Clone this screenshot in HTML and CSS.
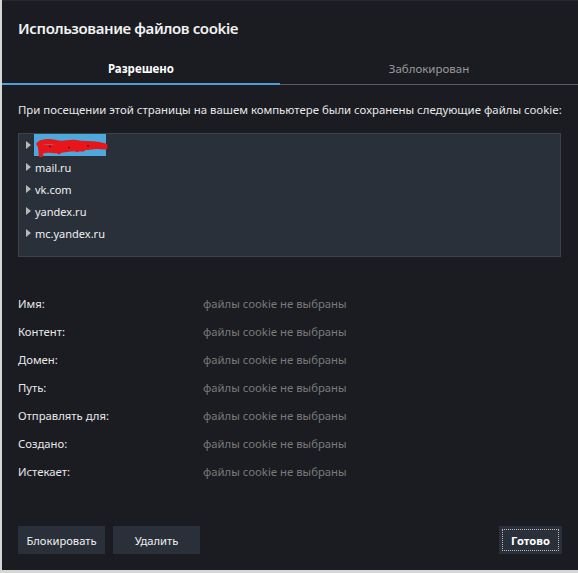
FILE: index.html
```html
<!DOCTYPE html>
<html lang="ru">
<head>
<meta charset="utf-8">
<link rel="stylesheet" href="styles.css">
</head>
<body>
<div class="dialog">
  <div class="header"><h1 class="title">Использование файлов cookie</h1></div>
  <div class="tabs">
    <div class="tab tab-active">Разрешено</div>
    <div class="tab tab-inactive">Заблокирован</div>
  </div>
  <p class="desc">При посещении этой страницы на вашем компьютере были сохранены следующие файлы cookie:</p>
  <div class="tree">
    <div class="tree-row">
      <span class="arrow"></span>
      <span class="selected">
        <svg class="scribble" width="74" height="20" viewBox="0 0 74 20">
          <path d="M4 7 C10 3 18 5 24 6 C30 7 36 4 44 6 C52 7 60 6 70 9 M6 11 C14 9 22 12 30 10 C38 8 46 12 56 10 C62 9 66 10 70 10 M8 14 C14 12 20 15 28 13 C34 12 40 11 48 12" fill="none" stroke="#e8161b" stroke-width="5" stroke-linecap="round"/>
          <path d="M5 8 L6 18" stroke="#e8161b" stroke-width="4.5" stroke-linecap="round"/>
          <path d="M22 9 L24 15 M40 8 L42 13" stroke="#e8161b" stroke-width="4.5" stroke-linecap="round"/>
          <path d="M14 9 L16 10 M33 10 L35 11 M52 9 L54 9" stroke="#3a0d10" stroke-width="1"/>
        </svg>
      </span>
    </div>
    <div class="tree-row"><span class="arrow"></span><span class="label">mail.ru</span></div>
    <div class="tree-row"><span class="arrow"></span><span class="label">vk.com</span></div>
    <div class="tree-row"><span class="arrow"></span><span class="label">yandex.ru</span></div>
    <div class="tree-row"><span class="arrow"></span><span class="label">mc.yandex.ru</span></div>
  </div>
  <div class="details">
    <div class="dt">Имя:</div><div class="dd">файлы cookie не выбраны</div>
    <div class="dt">Контент:</div><div class="dd">файлы cookie не выбраны</div>
    <div class="dt">Домен:</div><div class="dd">файлы cookie не выбраны</div>
    <div class="dt">Путь:</div><div class="dd">файлы cookie не выбраны</div>
    <div class="dt">Отправлять для:</div><div class="dd">файлы cookie не выбраны</div>
    <div class="dt">Создано:</div><div class="dd">файлы cookie не выбраны</div>
    <div class="dt">Истекает:</div><div class="dd">файлы cookie не выбраны</div>
  </div>
  <div class="footer">
    <div class="left-btns">
      <button class="btn">Блокировать</button>
      <button class="btn">Удалить</button>
    </div>
    <button class="btn btn-done">Готово</button>
  </div>
</div>
</body>
</html>
```
FILE: styles.css
```css
html, body {
  margin: 0;
  padding: 0;
}
body {
  background: #d6d6d4;
  width: 578px;
  height: 573px;
  overflow: hidden;
  font-family: "Noto Sans", "Open Sans", sans-serif;
  font-size: 11.3px;
  color: #e8e8e8;
}
.dialog {
  margin-left: 2px;
  width: 576px;
  height: 570px;
  background: #1a1c21;
  border-top: 1px solid #25282e;
  box-sizing: border-box;
  display: flex;
  flex-direction: column;
}
.header {
  height: 55px;
  padding-left: 16px;
  display: flex;
  align-items: center;
}
.title {
  margin: 0;
  font-size: 15px;
  letter-spacing: -0.4px;
  font-weight: 600;
  color: #f2f2f2;
  padding-bottom: 2px;
}
.tabs {
  display: flex;
  height: 29px;
}
.tab {
  display: flex;
  align-items: center;
  justify-content: center;
  font-size: 11.5px;
  box-sizing: border-box;
  padding-bottom: 2px;
}
.tab-active {
  width: 278px;
  font-weight: 700;
  color: #ffffff;
  border-bottom: 2px solid #4d9fd3;
}
.tab-inactive {
  flex: 1;
  color: #9a9a9a;
  border-bottom: 1px solid #5a5e64;
  padding-bottom: 3px;
}
.desc {
  margin: 0;
  padding: 16px 0 0 16px;
  height: 34px;
  line-height: 18px;
  box-sizing: border-box;
  font-size: 11.4px;
  color: #e8e8e8;
  white-space: nowrap;
}
.tree {
  margin: 14px 0 0 16px;
  width: 543px;
  height: 124px;
  box-sizing: border-box;
  background: #2a3039;
  border: 1px solid #3c434c;
  padding-top: 1px;
}
.tree-row {
  height: 22px;
  display: flex;
  align-items: center;
}
.tree-row:first-child {
  margin-top: -1px;
}
.arrow {
  width: 0;
  height: 0;
  margin-left: 7px;
  margin-right: 4px;
  border-top: 4px solid transparent;
  border-bottom: 4px solid transparent;
  border-left: 5px solid #b8b8b8;
}
.selected {
  width: 72px;
  height: 22px;
  background: #4ba9dc;
  margin-left: -1px;
  position: relative;
}
.scribble {
  position: absolute;
  left: 1px;
  top: 3px;
}
.label {
  color: #f0f0f0;
  font-size: 11px;
}
.details {
  display: grid;
  grid-template-columns: 185px auto;
  grid-auto-rows: 28px;
  align-items: center;
  margin: 32px 0 0 16px;
}
.dt {
  color: #e8e8e8;
}
.dd {
  color: #7a7a7a;
}
.footer {
  margin-top: auto;
  margin-bottom: 16px;
  padding: 0 16px;
  display: flex;
  justify-content: space-between;
}
.left-btns {
  display: flex;
  gap: 8px;
}
.btn {
  font-family: inherit;
  font-size: 11.2px;
  color: #efefef;
  background: #2a3039;
  border: none;
  width: 87px;
  height: 28px;
  padding: 0;
  margin: 0;
}
.btn-done {
  width: 63px;
  font-weight: 700;
  color: #ffffff;
  outline: 1px dotted #b9bcc0;
  outline-offset: -4px;
}
```
